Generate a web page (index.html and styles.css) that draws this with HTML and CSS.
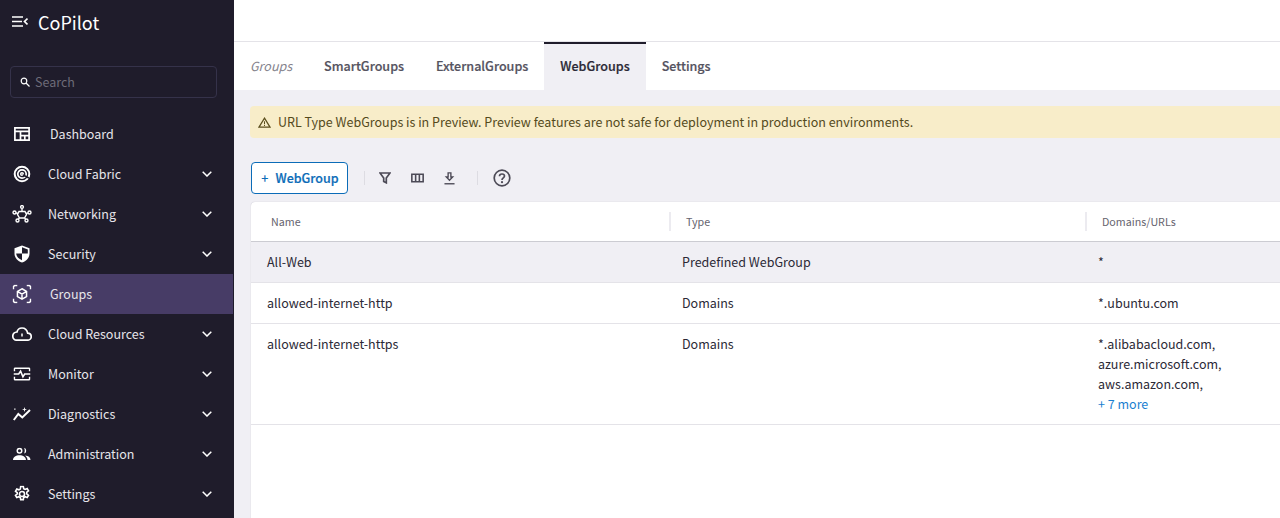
FILE: index.html
```html
<html>
  <head>
    <link rel="stylesheet" href="styles.css">
    <title>CoPilot</title>
  </head>
  <body>
    <div class="sidebar">
      <div class="brand">
        <svg class="collapse" viewBox="0 0 16 12" width="16" height="12"><path d="M0 1h11M0 5.500h10M0 10h11M15.500 2.500l-3 3 3 3" fill="none" stroke="#fff" stroke-width="1.700"/></svg>
        <span>CoPilot</span>
      </div>
      <div class="search">
        <svg viewBox="0 0 10 10" width="10" height="10"><circle cx="4" cy="4" r="2.800" fill="none" stroke="#fff" stroke-width="1.200"/><path d="M6 6l3.500 3.500" stroke="#fff" stroke-width="1.300"/></svg>
        <span>Search</span>
      </div>
      <ul class="menu">
        <li class="plain">
          <svg viewBox="0 0 16 14" width="16" height="14"><path d="M.9.9h14.200v12.200H.9zM.9 4.300h14.200M6.500 4.300v8.800M6.500 8.700h8.600M10.800 8.700v4.400" fill="none" stroke="#fff" stroke-width="1.700"/></svg>
          <span>Dashboard</span>
        </li>
        <li>
          <svg viewBox="0 0 18 18" width="18" height="18"><g fill="none" stroke="#fff"><circle cx="9" cy="9" r="7.300" stroke-width="2"/><circle cx="9" cy="9" r="4.200" stroke-width="1.700"/><circle cx="9" cy="9" r="1.300" stroke-width="1.500"/><path d="M10 10l6 3" stroke="#1f1c2b" stroke-width="1.800"/></g></svg>
          <span>Cloud Fabric</span>
          <svg class="chev" viewBox="0 0 10 6" width="10" height="6"><path d="M.7.7L5 5l4.300-4.300" fill="none" stroke="#fff" stroke-width="1.500"/></svg>
        </li>
        <li>
          <svg viewBox="0 0 20 18" width="20" height="18"><g fill="none" stroke="#fff" stroke-width="1.400"><circle cx="10" cy="2" r="1.400"/><circle cx="2.500" cy="7.500" r="1.500"/><circle cx="17.500" cy="7.500" r="1.500"/><circle cx="5.500" cy="15.500" r="1.500"/><circle cx="14.500" cy="15.500" r="1.500"/><path d="M10 3.500v3M7 6.500h6l1.500 3-2 3.500h-5l-2-3.500zM4 7.800l2.500 1M16 7.800l-2.500 1M6.300 14.200l1.200-1.300M13.700 14.200l-1.200-1.300"/></g></svg>
          <span>Networking</span>
          <svg class="chev" viewBox="0 0 10 6" width="10" height="6"><path d="M.7.7L5 5l4.300-4.300" fill="none" stroke="#fff" stroke-width="1.500"/></svg>
        </li>
        <li>
          <svg viewBox="0 0 16 18" width="16" height="18"><path d="M8 .5l7.500 2.800v5.200c0 4.300-3 7.500-7.500 9-4.500-1.500-7.500-4.700-7.500-9V3.300z" fill="#fff"/><path d="M8 2.300v6.200h5.800V4.400zM8 8.500H2.200c.2 3 2.500 5.400 5.800 6.700z" fill="#1f1c2b"/></svg>
          <span>Security</span>
          <svg class="chev" viewBox="0 0 10 6" width="10" height="6"><path d="M.7.7L5 5l4.300-4.300" fill="none" stroke="#fff" stroke-width="1.500"/></svg>
        </li>
        <li class="plain active">
          <svg viewBox="0 0 20 20" width="19" height="19"><g fill="none" stroke="#fff" stroke-width="1.600"><path d="M1 5V2.200L2.200 1H5M15 1h2.800L19 2.200V5M1 15v2.800L2.200 19H5M15 19h2.800l1.200-1.200V15"/><path d="M10 4.500l4.800 2.700v5.600L10 15.500l-4.800-2.700V7.200zM5.200 7.200l4.800 2.900 4.800-2.900M10 10.100v5.400"/></g></svg>
          <span>Groups</span>
        </li>
        <li>
          <svg viewBox="0 0 20 14" width="20" height="14"><path d="M5 13.200h10.500c2 0 3.700-1.500 3.700-3.500s-1.600-3.400-3.500-3.500C15 3 12.500 1 10 1 7.500 1 5.500 2.700 5 5 2.500 5.200.8 7 .8 9.200c0 2.200 1.900 4 4.200 4z" fill="none" stroke="#fff" stroke-width="1.700"/><path d="M10 6.500v3" stroke="#fff" stroke-width="1.500"/></svg>
          <span>Cloud Resources</span>
          <svg class="chev" viewBox="0 0 10 6" width="10" height="6"><path d="M.7.7L5 5l4.300-4.300" fill="none" stroke="#fff" stroke-width="1.500"/></svg>
        </li>
        <li>
          <svg viewBox="0 0 18 14" width="17" height="14"><path d="M.9 4V1.500l.6-.6h15l.6.600V4M.9 10v2.500l.6.600h15l.6-.6V10M0 7h5.500l2-3 2.500 6 1.800-3H18" fill="none" stroke="#fff" stroke-width="1.700"/></svg>
          <span>Monitor</span>
          <svg class="chev" viewBox="0 0 10 6" width="10" height="6"><path d="M.7.7L5 5l4.300-4.300" fill="none" stroke="#fff" stroke-width="1.500"/></svg>
        </li>
        <li>
          <svg viewBox="0 0 18 14" width="18" height="14"><path d="M.8 13l4.500-6 4 3.500L17 3" fill="none" stroke="#fff" stroke-width="2"/><path d="M11.500 0l.6 1.900 1.900.6-1.900.6-.6 1.900-.6-1.900L9 2.500l1.900-.6zM1.200 1.500h1.300v1.300H1.200z" fill="#fff"/></svg>
          <span>Diagnostics</span>
          <svg class="chev" viewBox="0 0 10 6" width="10" height="6"><path d="M.7.7L5 5l4.300-4.300" fill="none" stroke="#fff" stroke-width="1.500"/></svg>
        </li>
        <li>
          <svg viewBox="0 0 18 13" width="18" height="13"><g fill="#fff"><path d="M6.500.2a3 3 0 110 6 3 3 0 010-6zm0 1.500a1.500 1.500 0 100 3 1.500 1.500 0 000-3z" fill-rule="evenodd"/><path d="M0 12.500c0-3 3-4.700 6.500-4.700s6.500 1.700 6.500 4.700zM11 .3a3 3 0 010 5.800c1-1.600 1-4.200 0-5.800zM12 7.900c3.500.2 5.500 1.800 5.500 4.600h-3c0-2-1-3.500-2.500-4.600z"/></g></svg>
          <span>Administration</span>
          <svg class="chev" viewBox="0 0 10 6" width="10" height="6"><path d="M.7.7L5 5l4.300-4.300" fill="none" stroke="#fff" stroke-width="1.500"/></svg>
        </li>
        <li>
          <svg viewBox="0 0 18 18" width="17" height="17"><g fill="none" stroke="#fff" stroke-width="1.700"><circle cx="9" cy="9" r="2.700"/><path d="M7.600 1h2.800l.4 2.300 1.500.8 2.200-.9 1.400 2.400-1.800 1.500v1.800l1.800 1.500-1.400 2.400-2.200-.9-1.500.8-.4 2.300H7.600l-.4-2.300-1.500-.8-2.200.9-1.400-2.400 1.800-1.500V7.600L2.100 6.100l1.400-2.400 2.200.9 1.500-.8z"/></g></svg>
          <span>Settings</span>
          <svg class="chev" viewBox="0 0 10 6" width="10" height="6"><path d="M.7.7L5 5l4.300-4.300" fill="none" stroke="#fff" stroke-width="1.500"/></svg>
        </li>
      </ul>
    </div>
    <div class="main">
      <div class="topbar"></div>
      <div class="tabs">
        <span class="tab-title">Groups</span>
        <a class="tab">SmartGroups</a>
        <a class="tab">ExternalGroups</a>
        <a class="tab current">WebGroups</a>
        <a class="tab">Settings</a>
      </div>
      <div class="content">
        <div class="banner">
          <svg viewBox="0 0 14 12" width="13" height="11"><path d="M7 1.200L13 11H1z" fill="none" stroke="#5c4f1e" stroke-width="1.300"/><path d="M7 4.500v3.200M7 8.500v1.200" stroke="#5c4f1e" stroke-width="1.100"/></svg>
          <span>URL Type WebGroups is in Preview. Preview features are not safe for deployment in production environments.</span>
        </div>
        <div class="toolbar">
          <button class="add"><span class="plus">+</span>WebGroup</button>
          <i class="sep"></i>
          <svg class="tool" viewBox="0 0 12 12" width="12" height="12"><path d="M1 1h10L7.300 6v4.800L4.700 9.500V6z" fill="none" stroke="#4c4a56" stroke-width="1.700"/></svg>
          <svg class="tool" viewBox="0 0 14 10" width="13" height="10"><path d="M.9.900h12.200v8.200H.9zM5 .9v8.200M9 .9v8.200" fill="none" stroke="#4c4a56" stroke-width="1.700"/></svg>
          <svg class="tool" viewBox="0 0 12 14" width="11" height="13"><path d="M4.500.8h3v4.500h2L6 9 2.500 5.300h2z" fill="none" stroke="#4c4a56" stroke-width="1.500"/><path d="M.5 12h11v1.500H.5z" fill="#4c4a56"/></svg>
          <i class="sep sep-right"></i>
          <svg class="help" viewBox="0 0 18 18" width="18" height="18"><circle cx="9" cy="9" r="7.800" fill="none" stroke="#4c4a56" stroke-width="1.700"/><path d="M6.500 7.200C6.500 5.800 7.600 5 9 5s2.500.9 2.500 2.100c0 1.800-2.500 1.900-2.500 3.900" fill="none" stroke="#4c4a56" stroke-width="1.700"/><circle cx="9" cy="13.200" r="1.100" fill="#4c4a56"/></svg>
        </div>
        <div class="card">
          <div class="row head">
            <div class="cell"><span>Name</span></div>
            <div class="cell"><span>Type</span></div>
            <div class="cell"><span>Domains/URLs</span></div>
          </div>
          <div class="row shaded">
            <div class="cell">All-Web</div>
            <div class="cell">Predefined WebGroup</div>
            <div class="cell">*</div>
          </div>
          <div class="row">
            <div class="cell">allowed-internet-http</div>
            <div class="cell">Domains</div>
            <div class="cell">*.ubuntu.com</div>
          </div>
          <div class="row">
            <div class="cell">allowed-internet-https</div>
            <div class="cell">Domains</div>
            <div class="cell">*.alibabacloud.com,<br>azure.microsoft.com,<br>aws.amazon.com,<br><a class="more">+ 7 more</a></div>
          </div>
        </div>
      </div>
    </div>
  </body>
</html>
```

FILE: styles.css
```css
html, body {
  height: 100%;
}
body {
  margin: 0;
  display: flex;
  height: 518px;
  overflow: hidden;
  font-family: "Noto Sans CJK SC", "Noto Sans", sans-serif;
  font-size: 12.5px;
  line-height: 20px;
  color: #2b2936;
  background: #f0eff4;
}

.sidebar {
  width: 234px;
  flex: none;
  background: #1f1c2b;
  color: #e6e5ea;
}
.brand {
  height: 44px;
  display: flex;
  align-items: center;
  padding-left: 12px;
  color: #fff;
  font-size: 18px;
}
.brand span {
  margin-left: 10px;
}
.search {
  margin: 22px 17px 0 10px;
  height: 30px;
  border: 1px solid #35324a;
  border-radius: 4px;
  display: flex;
  align-items: center;
  padding-left: 9px;
  color: #6d6b78;
}
.search span {
  margin-left: 5px;
}
.menu {
  list-style: none;
  margin: 16px 0 0;
  padding: 0;
}
.menu li {
  height: 40px;
  display: flex;
  align-items: center;
  position: relative;
  padding-left: 48px;
}
.menu li > svg:first-child {
  position: absolute;
  left: 22px;
  top: 50%;
  transform: translate(-50%, -50%);
}
.menu li.plain {
  padding-left: 50px;
}
.menu li.active {
  background: #473c66;
  margin-right: 1px;
}
.chev {
  margin-left: auto;
  margin-right: 22px;
}

.main {
  flex: 1;
  min-width: 0;
  display: flex;
  flex-direction: column;
}
.topbar {
  height: 41px;
  flex: none;
  background: #fff;
  border-bottom: 1px solid #e4e3e8;
}
.tabs {
  height: 48px;
  flex: none;
  background: #fff;
  display: flex;
  align-items: stretch;
  font-size: 12.55px;
  font-weight: 500;
  -webkit-text-stroke: 0.2px;
  color: #55535f;
}
.tab-title {
  display: flex;
  align-items: center;
  padding: 0 16px;
  color: #85838d;
  font-size: 12.5px;
  font-style: italic;
  font-weight: 400;
  -webkit-text-stroke: 0;
}
.tab {
  display: flex;
  align-items: center;
  padding: 0 16px;
}
.tab.current {
  background: #f0eff4;
  color: #2b2936;
  box-shadow: inset 0 2px 0 #1f1c2b;
}

.content {
  flex: 1;
  min-height: 0;
  padding: 16px 0 0 16px;
  display: flex;
  flex-direction: column;
}
.banner {
  height: 32px;
  flex: none;
  background: #f8edc9;
  border-radius: 4px 0 0 4px;
  display: flex;
  align-items: center;
  padding-left: 8px;
  color: #544a1c;
}
.banner span {
  margin-left: 7px;
}
.toolbar {
  margin-top: 24px;
  height: 32px;
  flex: none;
  display: flex;
  align-items: center;
  padding-left: 1px;
}
.add {
  height: 32px;
  width: 97px;
  padding: 0 0 2px 1px;
  background: #fff;
  border: 1px solid #0b6cb8;
  border-radius: 4px;
  color: #0b6cb8;
  font-family: inherit;
  font-size: 12.5px;
  font-weight: 500;
  -webkit-text-stroke: 0.2px;
}
.plus {
  margin-right: 7px;
  -webkit-text-stroke: 0;
}
.sep {
  width: 1px;
  height: 14px;
  background: #dddce2;
  margin: 0 14px 0 16px;
}
.tool {
  margin-right: 20px;
}
.sep-right {
  margin: 0 16px 0 2px;
}
.help {
  margin-left: -1px;
}

.card {
  margin: 8px 0 0 1px;
  flex: 1;
  background: #fff;
  border-radius: 4px 0 0 0;
  box-shadow: 0 0 1px rgba(40, 38, 60, 0.3);
}
.row {
  display: grid;
  grid-template-columns: 415px 416px 1fr;
  border-bottom: 1px solid #e4e3e8;
}
.row .cell {
  padding: 10px 16px;
}
.row.shaded {
  background: #f0eff4;
}
.row.head {
  height: 39px;
  align-items: center;
  font-size: 10.7px;
  color: #65636e;
  border-bottom-color: #ccccd2;
}
.row.head .cell {
  padding: 0;
  padding-left: 20px;
}
.row.head .cell + .cell {
  padding-left: 3px;
}
.row.head .cell + .cell span {
  border-left: 2px solid #ecebf0;
  padding: 2px 0 2px 15px;
}
.more {
  color: #1b7fd0;
}
```
